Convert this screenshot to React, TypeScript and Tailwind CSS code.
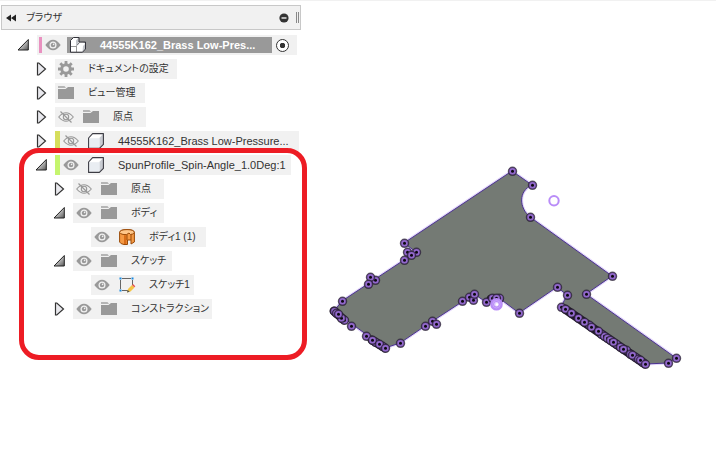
import React from "react";

type IconKind = "gear" | "folder" | "cube" | "cubes" | "body" | "sketch";

interface Node {
  label: string;
  level: number;
  icon: IconKind;
  expanded?: boolean;
  leaf?: boolean;
  eye?: "on" | "off";
  bar?: string;
  width: string;
  active?: boolean;
}

const NODES: Node[] = [
  { label: "44555K162_Brass Low-Pres...", level: 0, icon: "cubes", expanded: true, eye: "on", width: "w-[260px]", active: true },
  { label: "ドキュメントの設定", level: 1, icon: "gear", width: "w-[122px]" },
  { label: "ビュー管理", level: 1, icon: "folder", width: "w-[90px]" },
  { label: "原点", level: 1, icon: "folder", eye: "off", width: "w-[91px]" },
  { label: "44555K162_Brass Low-Pressure...", level: 1, icon: "cube", eye: "off", bar: "bg-[#d6de5c]", width: "w-[244px]" },
  { label: "SpunProfile_Spin-Angle_1.0Deg:1", level: 1, icon: "cube", expanded: true, eye: "on", bar: "bg-[#c5f56e]", width: "w-[236px]" },
  { label: "原点", level: 2, icon: "folder", eye: "off", width: "w-[91px]" },
  { label: "ボディ", level: 2, icon: "folder", expanded: true, eye: "on", width: "w-[91px]" },
  { label: "ボディ1 (1)", level: 3, icon: "body", leaf: true, eye: "on", width: "w-[115px]" },
  { label: "スケッチ", level: 2, icon: "folder", expanded: true, eye: "on", width: "w-[99px]" },
  { label: "スケッチ1", level: 3, icon: "sketch", leaf: true, eye: "on", width: "w-[103px]" },
  { label: "コンストラクション", level: 2, icon: "folder", eye: "on", width: "w-[139px]" },
];

const INDENT = ["pl-4", "pl-[34px]", "pl-[52px]", "pl-[70px]"];

function Arrow({ expanded }: { expanded?: boolean }) {
  return (
    <svg viewBox="0 0 12 14" className="block h-[14px] w-3">
      <defs>
        <linearGradient id="open" x1="0" y1="0" x2="1" y2="1">
          <stop offset="0.35" stopColor="#d8d8d8" />
          <stop offset="1" stopColor="#555" />
        </linearGradient>
      </defs>
      {expanded ? (
        <path d="M11.3 1.5V12H1z" fill="url(#open)" stroke="#222" strokeWidth="1" />
      ) : (
        <path d="M2.500 1v12h1.300L10.500 7 3.800 1z" fill="#e9e9ee" stroke="#333" strokeWidth="1.2" />
      )}
    </svg>
  );
}

function Eye({ off }: { off?: boolean }) {
  return (
    <svg viewBox="0 0 16 12" className="block h-3 w-4">
      {off ? (
        <g fill="none" stroke="#999" strokeWidth="1.1">
          <path d="M.7 6Q8-2.500 15.300 6 8 14.500.700 6z" />
          <circle cx="8" cy="6" r="2.700" />
          <path d="M2.500.500l11 11" strokeWidth="1.300" />
        </g>
      ) : (
        <g>
          <path d="M.3 6Q8-4.500 15.700 6 8 16.500.300 6z" fill="#999" />
          <circle cx="8" cy="6" r="2.900" fill="#999" stroke="#f1f1f1" strokeWidth="1.300" />
          <circle cx="8.600" cy="5.400" r=".8" fill="#f1f1f1" />
        </g>
      )}
    </svg>
  );
}

const Cube = () => (
  <g strokeLinejoin="round">
    <path d="M.6 5 4.600.600h10.800v10.800l-4 4H.600z" fill="#fff" />
    <path d="M11.400 5 15.400.600v10.800l-4 4z" fill="#c9ccd2" />
    <path d="M1.500 5.200h9.900v9.500H1.500z" fill="#e9edf2" />
    <path d="M.6 5 4.600.600h10.800v10.800l-4 4H.600z" fill="none" stroke="#3c3c44" strokeWidth="1.100" />
  </g>
);

function Icon({ kind }: { kind: IconKind }) {
  return (
    <svg viewBox="0 0 16 16" className="block size-4 shrink-0 overflow-visible">
      {kind === "cube" && <Cube />}
      {kind === "folder" && (
        <g fill="#999">
          <path d="M0 1h6.500L8 3H0z" fill="#b5b5b5" />
          <path d="M0 4h7.500L10 2h6v12H0z" />
        </g>
      )}
      {kind === "gear" && (
        <g stroke="#999" fill="none">
          <circle cx="8" cy="8" r="4.300" strokeWidth="3" />
          <path d="M8 0v3M8 13v3M0 8h3M13 8h3M2.300 2.300l2.200 2.200M11.500 11.500l2.200 2.200M2.300 13.700l2.200-2.200M11.500 4.500l2.200-2.200" strokeWidth="2.800" />
        </g>
      )}
      {kind === "cubes" && (
        <g strokeLinejoin="round">
          <path d="M.5 3.500 3.500.500h5v5h4.500l2.500 1v5.500l-3 3H.5z" fill="#fff" />
          <path d="M6 3.500 8.500.500v6.500L6 9zM13 9l2.500-2.500V12l-3 3z" fill="#c4c7cc" />
          <path d="M.8 9.500h5.700M6.500 9v6" fill="none" stroke="#999" />
          <path d="M.5 3.500 3.500.500h5.500V5h6.500v7l-3 3.200H.5z" fill="none" stroke="#33333b" />
          <path d="M6.800 8.500 9.500 5.500" stroke="#55555c" strokeWidth=".8" />
        </g>
      )}
      {kind === "body" && (
        <g stroke="#9a4a08" strokeWidth="1" strokeLinejoin="round">
          <path d="M.6 3.500Q1 .6 8 .6t7.400 2.900V13l-3.400 2v-4H8.500v4.500H5Q1.500 15 .6 13z" fill="#f59a45" />
          <path d="M.6 3.500Q1 .6 8 .6t7.400 2.900Q14 5.500 11.500 5.500L10 4 7.500 5.600Q2 5.800.6 3.500z" fill="#ffc78a" />
          <path d="M5 6.200h2.500v8.800H5z" fill="#d96d18" stroke="none" />
          <path d="M8 5.500V11M12 5.500V11" fill="none" />
        </g>
      )}
      {kind === "sketch" && (
        <g>
          <path d="M1.500 1.500h12M1.500 1.500v12H9M13.500 1.500V8" fill="none" stroke="#666" />
          <path d="M0 0h3v3H0zM12 0h3v3h-3zM0 12h3v3H0z" fill="#f1f1f1" />
          <path d="M.5.5h2v2h-2zM12.500.5h2v2h-2zM.5 12.500h2v2h-2z" fill="#1687e0" />
          <path d="m8 15.500 1-3.500 4-4 2.500 2.500-4 4z" fill="#f5c444" />
          <path d="m13 8 1-1 2.300 2.300-1 1z" fill="#e84a4a" />
          <path d="m8 15.500.7-2.500 2 1.800z" fill="#555" />
        </g>
      )}
    </svg>
  );
}

function TreeRow({ node }: { node: Node }) {
  const latin = /^[\x20-\x7e]+$/.test(node.label);
  return (
    <li className={`flex h-5 items-center ${INDENT[node.level]}`}>
      <span className="flex w-5 shrink-0 items-center">
        {!node.leaf && (
          <button aria-label={node.expanded ? "折りたたむ" : "展開"}>
            <Arrow expanded={node.expanded} />
          </button>
        )}
      </span>
      {node.active ? (
        <div className={`flex h-5 items-center bg-[#f1f1f1] pl-[2px] ${node.width}`}>
          <span className="h-4 w-[3px] bg-[#e991c0]" />
          <button aria-label="表示" className="ml-[3px]"><Eye /></button>
          <div className="ml-[6px] flex h-4 w-[205px] items-center bg-[#999] pl-[3px]">
            <Icon kind="cubes" />
            <span className="ml-[14px] text-[11px] leading-4 font-bold text-white">{node.label}</span>
          </div>
          <input
            type="radio"
            name="active-component"
            aria-label="アクティブ"
            defaultChecked
            className="ml-1 size-[13px] appearance-none rounded-full border border-[#333] bg-[radial-gradient(circle,#333_0_2.5px,#fff_3px)]"
          />
        </div>
      ) : (
        <div className={`flex h-5 items-center bg-[#f1f1f1] whitespace-nowrap ${node.width}`}>
          {node.bar && <span className={`h-5 w-[5px] ${node.bar}`} />}
          {node.eye && (
            <button aria-label="表示" className="mr-[6px] ml-[3px]"><Eye off={node.eye === "off"} /></button>
          )}
          <span className="ml-[3px]"><Icon kind={node.icon} /></span>
          <span className={`ml-[14px] leading-5 text-[#333] ${latin ? "text-[11px]" : "text-[10px]"}`}>{node.label}</span>
        </div>
      )}
    </li>
  );
}

const OUTLINE =
  "M404 243 512 171 532 185C518 191 519 208 530 217L612 276 586 294 676 358 668 363 645 364 561 307 567 295 557 287 519 313 499 298 486 302 474 294 425 326 400 343 385 348 334 311 342 301 404 260 416 252z";

const VERTICES: [number, number][] = [
  [404, 243], [407, 252], [416, 252], [411, 255], [404, 260], [375, 280], [370, 277], [368, 284],
  [342, 301], [334, 311], [336, 313], [344, 320], [341, 318], [338, 314], [351, 326], [366, 336],
  [375, 342], [372, 340], [382, 346], [379, 344], [385, 348], [400, 343], [425, 326], [432, 321],
  [436, 324], [462, 301], [469, 297], [473, 300], [474, 294], [486, 302], [492, 298], [499, 298],
  [496, 298], [519, 313], [557, 287], [567, 295], [586, 294], [612, 276], [530, 217], [532, 185],
  [512, 171], [561, 307], [565, 309], [571, 313], [578, 318], [589, 325], [591, 327], [584, 322],
  [601, 334], [604, 336], [598, 331], [607, 338], [610, 340], [616, 344], [613, 342], [620, 347],
  [626, 350], [623, 349], [630, 354], [635, 357], [632, 355], [638, 359], [642, 362], [640, 360],
  [645, 364], [668, 363], [676, 358],
];

function Model() {
  return (
    <svg viewBox="302 1 414 453" className="block w-full" role="img" aria-label="スケッチプロファイル">
      <path d={OUTLINE} fill="#747a74" stroke="#e2d5fb" strokeWidth="3" />
      <path d={OUTLINE} fill="#747a74" stroke="#4b3390" strokeWidth="1" />
      <path
        d="M565 309 645 364M334 311l10 9M372 340l13 8M491 299h8"
        stroke="#241c2c"
        strokeWidth="9"
        strokeLinecap="round"
      />
      {VERTICES.map(([x, y]) => (
        <g key={`${x}-${y}`}>
          <circle cx={x + 0.5} cy={y + 0.3} r="4" fill="#9268cc" stroke="#1f1828" strokeOpacity="0.7" strokeWidth="1.500" />
          <circle cx={x + 0.5} cy={y + 0.3} r="1.500" fill="#0c0810" />
        </g>
      ))}
      <circle cx="554" cy="200.700" r="4.700" fill="#fff" stroke="#b98cf8" strokeWidth="2" />
      <circle cx="496.500" cy="304.300" r="4.300" fill="#e5d5fd" stroke="#b98cf8" strokeWidth="4" />
      <circle cx="496.500" cy="304.300" r="3.700" fill="none" stroke="#cfb0fb" strokeWidth=".7" />
      <circle cx="497" cy="304.500" r="1.200" fill="#fff" />
    </svg>
  );
}

export default function App() {
  return (
    <div className="min-h-screen overflow-hidden border-t border-[#f1f1f1] bg-white font-['Liberation_Sans','Noto_Sans_CJK_JP',sans-serif]">
      <main className="flex items-start">
        <aside className="relative w-[302px] shrink-0 pt-1 pl-px">
          <header className="flex h-[25px] w-[300px] items-center border border-[#c8c8c8] bg-[#f1f1f1] pl-1 text-[10px] text-[#333]">
            <button aria-label="パネルを閉じる">
              <svg viewBox="0 0 10 8" className="block h-2 w-[10px]">
                <path d="M5 .5v7L0 4zM10 .5v7L5 4z" fill="#222" />
              </svg>
            </button>
            <h1 className="ml-[10px] [font-feature-settings:'palt']">ブラウザ</h1>
            <button aria-label="最小化" className="mr-[7px] ml-auto">
              <svg viewBox="0 0 10 10" className="block size-[10px]">
                <circle cx="5" cy="5" r="4.600" fill="#333" />
                <path d="M2.500 5h5" stroke="#fff" strokeWidth="1.300" />
              </svg>
            </button>
            <span className="mr-px h-[11px] w-[3px] border-x border-[#888]" />
          </header>
          <ul className="flex flex-col gap-1 pt-[5px] [font-feature-settings:'palt']">
            {NODES.map((node, i) => (
              <TreeRow key={i} node={node} />
            ))}
          </ul>
          <div className="pointer-events-none absolute top-[147px] left-[19px] h-[212px] w-[288px] rounded-[20px] border-5 border-[#ed1c24]" />
        </aside>
        <section className="min-w-0 flex-1">
          <Model />
        </section>
      </main>
    </div>
  );
}
